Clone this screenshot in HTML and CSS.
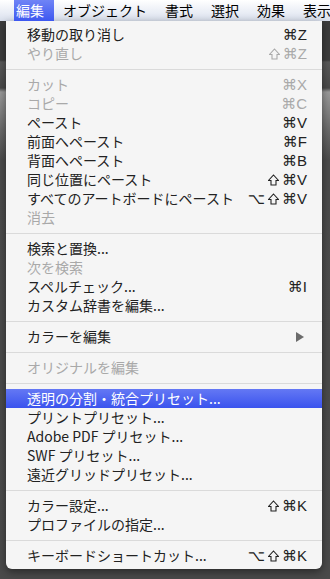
FILE: index.html
```html
<!DOCTYPE html>
<html lang="ja">
<head>
  <meta charset="UTF-8">
  <title>編集メニュー</title>
  <link rel="stylesheet" href="styles.css">
</head>
<body>
  <div class="menubar">
    <span class="mb-item active">編集</span>
    <span class="mb-item">オブジェクト</span>
    <span class="mb-item">書式</span>
    <span class="mb-item">選択</span>
    <span class="mb-item">効果</span>
    <span class="mb-item">表示</span>
  </div>

  <div class="menu">
    <div class="item"><span>移動の取り消し</span><span class="key">⌘Z</span></div>
    <div class="item disabled"><span>やり直し</span><span class="key"><svg class="shift" viewBox="0 0 11 12"><path d="M5.5 1 L10.5 6.5 H8 V11 H3 V6.5 H0.5 Z"/></svg>⌘Z</span></div>
    <div class="sep"></div>

    <div class="item disabled"><span>カット</span><span class="key">⌘X</span></div>
    <div class="item disabled"><span>コピー</span><span class="key">⌘C</span></div>
    <div class="item"><span>ペースト</span><span class="key">⌘V</span></div>
    <div class="item"><span>前面へペースト</span><span class="key">⌘F</span></div>
    <div class="item"><span>背面へペースト</span><span class="key">⌘B</span></div>
    <div class="item"><span>同じ位置にペースト</span><span class="key"><svg class="shift" viewBox="0 0 11 12"><path d="M5.5 1 L10.5 6.5 H8 V11 H3 V6.5 H0.5 Z"/></svg>⌘V</span></div>
    <div class="item"><span>すべてのアートボードにペースト</span><span class="key">⌥<svg class="shift" viewBox="0 0 11 12"><path d="M5.5 1 L10.5 6.5 H8 V11 H3 V6.5 H0.5 Z"/></svg>⌘V</span></div>
    <div class="item disabled"><span>消去</span></div>
    <div class="sep"></div>

    <div class="item"><span>検索と置換...</span></div>
    <div class="item disabled"><span>次を検索</span></div>
    <div class="item"><span>スペルチェック...</span><span class="key">⌘I</span></div>
    <div class="item"><span>カスタム辞書を編集...</span></div>
    <div class="sep"></div>

    <div class="item">
      <span>カラーを編集</span>
      <svg class="arrow" width="8" height="10" viewBox="0 0 8 10"><path d="M0 0 L8 5 L0 10 Z" fill="#6b6b6b"/></svg>
    </div>
    <div class="sep"></div>

    <div class="item disabled"><span>オリジナルを編集</span></div>
    <div class="sep"></div>

    <div class="item selected"><span>透明の分割・統合プリセット...</span></div>
    <div class="item"><span>プリントプリセット...</span></div>
    <div class="item"><span>Adobe PDF プリセット...</span></div>
    <div class="item"><span>SWF プリセット...</span></div>
    <div class="item"><span>遠近グリッドプリセット...</span></div>
    <div class="sep"></div>

    <div class="item"><span>カラー設定...</span><span class="key"><svg class="shift" viewBox="0 0 11 12"><path d="M5.5 1 L10.5 6.5 H8 V11 H3 V6.5 H0.5 Z"/></svg>⌘K</span></div>
    <div class="item"><span>プロファイルの指定...</span></div>
    <div class="sep"></div>

    <div class="item"><span>キーボードショートカット...</span><span class="key">⌥<svg class="shift" viewBox="0 0 11 12"><path d="M5.5 1 L10.5 6.5 H8 V11 H3 V6.5 H0.5 Z"/></svg>⌘K</span></div>
  </div>
</body>
</html>
```

FILE: styles.css
```css
* {
  box-sizing: border-box;
}

body {
  margin: 0;
  width: 330px;
  height: 579px;
  overflow: hidden;
  font-family: "Noto Sans CJK JP", "DejaVu Sans", sans-serif;
  background: linear-gradient(to bottom, #3c3c3c 0, #3c3c3c 60px, #5a5a5a 62px, #4a4a4a 88px, #9a9a9a 92px, #6a6a6a 130px, #4c4c4c 160px, #4a4a4a 100%);
}

.menubar {
  height: 21px;
  display: flex;
  align-items: stretch;
  background: linear-gradient(to bottom, #ffffff, #e9edf5 60%, #d9dfec);
  font-size: 14px;
  line-height: 21px;
  color: #000;
}

.mb-item {
  padding: 0 9px;
  white-space: nowrap;
}

.mb-item.active {
  margin-left: 14px;
  padding: 0 10px 0 2px;
  color: #fff;
  background: linear-gradient(to bottom, #6f84f6, #3d57f0);
}

.menu {
  width: 316px;
  margin-left: 6px;
  padding: 4px 0 4px;
  background: #f5f5f5;
  border-radius: 0 0 6px 6px;
  box-shadow: 0 3px 8px rgba(0, 0, 0, 0.45);
}

.item {
  height: 19px;
  display: flex;
  justify-content: space-between;
  align-items: center;
  padding: 0 15px 0 21px;
  font-size: 14px;
  line-height: 19px;
  color: #222;
  white-space: nowrap;
}

.item.disabled {
  color: #a9a9a9;
}

.item.selected {
  color: #fff;
  background: linear-gradient(to bottom, #6478f4, #3a53ee);
}

.key {
  display: flex;
  align-items: center;
  gap: 3px;
  font-family: "Liberation Sans", "DejaVu Sans", sans-serif;
  font-size: 15px;
}

.shift {
  width: 11px;
  height: 12px;
  fill: none;
  stroke: currentColor;
  stroke-width: 1.1;
}

.arrow {
  margin-right: 3px;
}

.sep {
  height: 1px;
  margin: 6px 0 5px;
  background: #dadada;
}
```
